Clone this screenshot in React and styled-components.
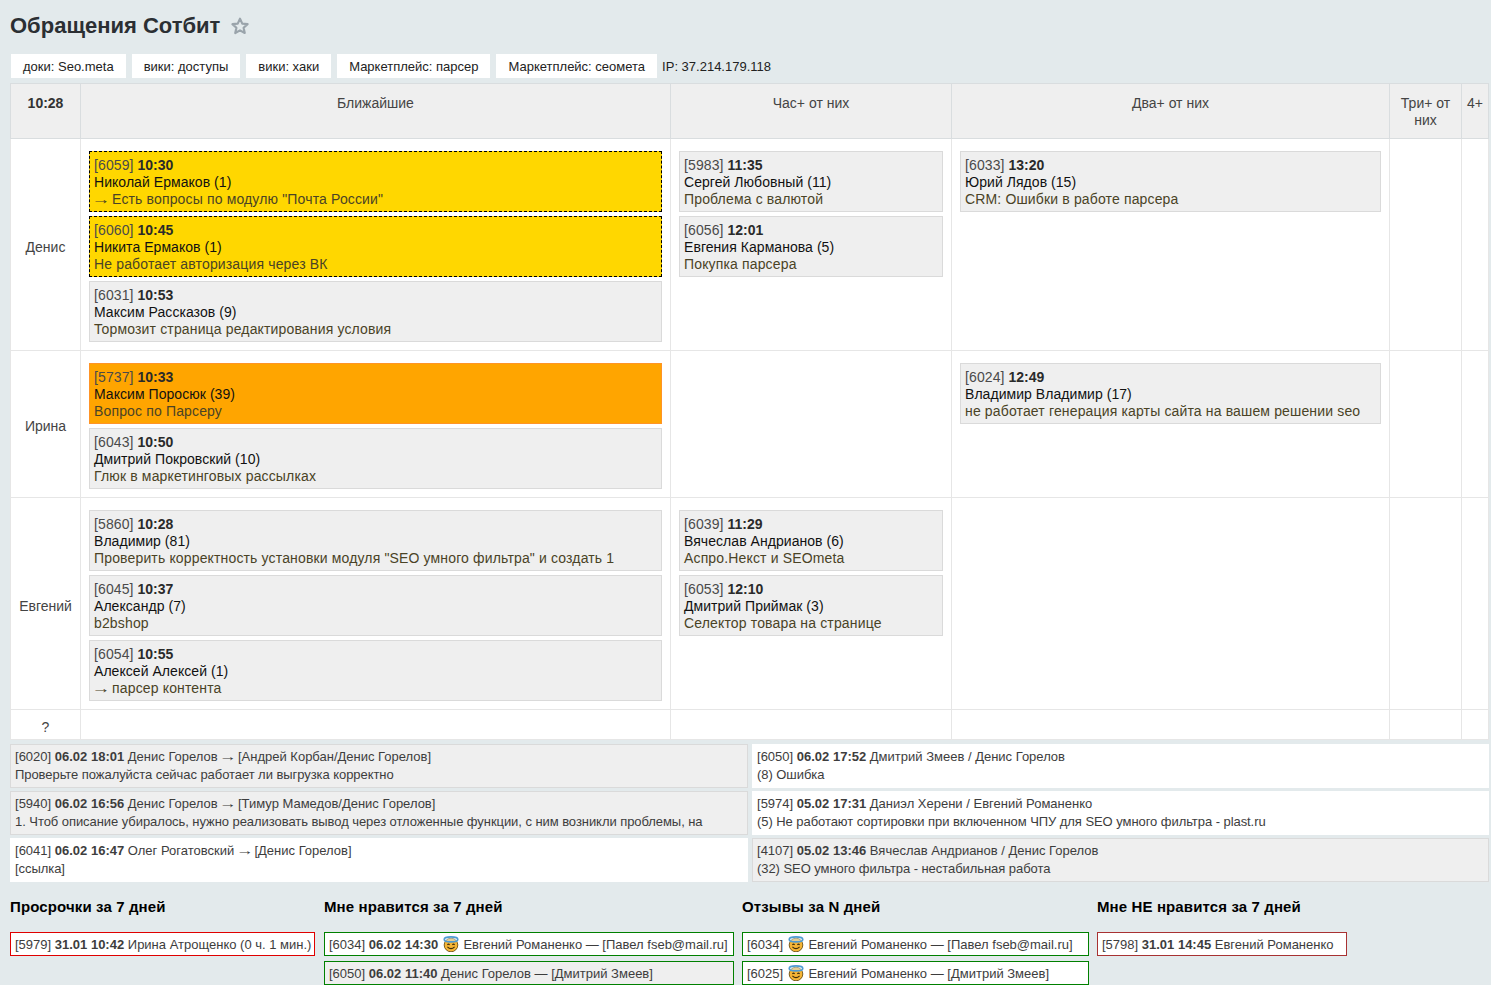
import React from 'react'
import styled, { createGlobalStyle } from 'styled-components'

const GlobalStyle = createGlobalStyle`
    html, body {
        margin: 0;
        padding: 0;
        background: #e3eaec;
        overflow: hidden;
    }
    body {
        font-family: "Liberation Sans", Arial, sans-serif;
        color: #333;
    }
`

const links = ['доки: Seo.meta', 'вики: доступы', 'вики: хаки', 'Маркетплейс: парсер', 'Маркетплейс: сеомета']

const rows = [
    {
        name: 'Денис',
        height: 212,
        cells: [
            [
                { id: 6059, time: '10:30', who: 'Николай Ермаков (1)', arrow: true, text: 'Есть вопросы по модулю "Почта России"', tone: 'yellow' },
                { id: 6060, time: '10:45', who: 'Никита Ермаков (1)', text: 'Не работает авторизация через ВК', tone: 'yellow' },
                { id: 6031, time: '10:53', who: 'Максим Рассказов (9)', text: 'Тормозит страница редактирования условия' },
            ],
            [
                { id: 5983, time: '11:35', who: 'Сергей Любовный (11)', text: 'Проблема с валютой' },
                { id: 6056, time: '12:01', who: 'Евгения Карманова (5)', text: 'Покупка парсера' },
            ],
            [{ id: 6033, time: '13:20', who: 'Юрий Лядов (15)', text: 'CRM: Ошибки в работе парсера' }],
        ],
    },
    {
        name: 'Ирина',
        height: 147,
        cells: [
            [
                { id: 5737, time: '10:33', who: 'Максим Поросюк (39)', text: 'Вопрос по Парсеру', tone: 'orange' },
                { id: 6043, time: '10:50', who: 'Дмитрий Покровский (10)', text: 'Глюк в маркетинговых рассылках' },
            ],
            [],
            [{ id: 6024, time: '12:49', who: 'Владимир Владимир (17)', text: 'не работает генерация карты сайта на вашем решении seo' }],
        ],
    },
    {
        name: 'Евгений',
        height: 212,
        cells: [
            [
                { id: 5860, time: '10:28', who: 'Владимир (81)', text: 'Проверить корректность установки модуля "SEO умного фильтра" и создать 1' },
                { id: 6045, time: '10:37', who: 'Александр (7)', text: 'b2bshop' },
                { id: 6054, time: '10:55', who: 'Алексей Алексей (1)', arrow: true, text: 'парсер контента' },
            ],
            [
                { id: 6039, time: '11:29', who: 'Вячеслав Андрианов (6)', text: 'Аспро.Некст и SEOmeta' },
                { id: 6053, time: '12:10', who: 'Дмитрий Приймак (3)', text: 'Селектор товара на странице' },
            ],
            [],
        ],
    },
]

const feedLeft = [
    { id: 6020, date: '06.02 18:01', from: 'Денис Горелов', to: '[Андрей Корбан/Денис Горелов]', text: 'Проверьте пожалуйста сейчас работает ли выгрузка корректно', grey: true },
    { id: 5940, date: '06.02 16:56', from: 'Денис Горелов', to: '[Тимур Мамедов/Денис Горелов]', text: '1. Чтоб описание убиралось, нужно реализовать вывод через отложенные функции, с ним возникли проблемы, на', grey: true },
    { id: 6041, date: '06.02 16:47', from: 'Олег Рогатовский', to: '[Денис Горелов]', text: '[ссылка]' },
]

const feedRight = [
    { id: 6050, date: '06.02 17:52', from: 'Дмитрий Змеев / Денис Горелов', text: '(8) Ошибка' },
    { id: 5974, date: '05.02 17:31', from: 'Даниэл Херени / Евгений Романенко', text: '(5) Не работают сортировки при включенном ЧПУ для SEO умного фильтра - plast.ru' },
    { id: 4107, date: '05.02 13:46', from: 'Вячеслав Андрианов / Денис Горелов', text: '(32) SEO умного фильтра - нестабильная работа', grey: true },
]

const AngelFace = () => (
    <Face viewBox="0 0 16 16">
        <circle cx="8" cy="9" r="6.8" fill="#f6b535" stroke="#6b4f14" strokeWidth="0.9" />
        <ellipse cx="8" cy="3.4" rx="6.8" ry="2.5" fill="#cfe6f5" fillOpacity="0.5" stroke="#4f9bd2" strokeWidth="1.6" />
        <path d="M4.4 8.8q1.1-1.3 2.2 0M9.4 8.8q1.1-1.3 2.2 0" fill="none" stroke="#3f2c0a" strokeWidth="1.1" />
        <path d="M4.4 10.8q3.6 3.6 7.2 0" fill="none" stroke="#3f2c0a" strokeWidth="1.1" />
    </Face>
)

const Ticket = ({ item }) => (
    <Card $tone={item.tone}>
        <Dim>[{item.id}]</Dim> <b>{item.time}</b>
        <Who>{item.who}</Who>
        <Subject>{item.arrow && <><Arrow>→</Arrow> </>}{item.text}</Subject>
    </Card>
)

const FeedItem = ({ item }) => (
    <FeedCard $grey={item.grey}>
        <div>
            [{item.id}] <b>{item.date}</b> {item.from}
            {item.to && <> <Arrow>→</Arrow> {item.to}</>}
        </div>
        <FeedText>{item.text}</FeedText>
    </FeedCard>
)

const App = () => (
    <Page>
        <GlobalStyle />
        <TitleRow>
            <Title>Обращения Сотбит</Title>
            <Star viewBox="0 0 24 24">
                <path d="M12 3.2l2.7 5.9 6.4.7-4.8 4.3 1.4 6.3L12 17.2l-5.7 3.2 1.4-6.3-4.8-4.3 6.4-.7z" fill="none" stroke="#9aa4ab" strokeWidth="2.6" strokeLinejoin="round" />
            </Star>
        </TitleRow>
        <LinkRow>
            {links.map((l) => <LinkButton key={l}>{l}</LinkButton>)}
            <Ip>IP: 37.214.179.118</Ip>
        </LinkRow>
        <Board>
            <colgroup>
                <col style={{ width: 70 }} />
                <col style={{ width: 590 }} />
                <col style={{ width: 281 }} />
                <col style={{ width: 438 }} />
                <col style={{ width: 72 }} />
                <col style={{ width: 27 }} />
            </colgroup>
            <thead>
                <tr>
                    <Head><b>10:28</b></Head>
                    <Head>Ближайшие</Head>
                    <Head>Час+ от них</Head>
                    <Head>Два+ от них</Head>
                    <Head>Три+ от них</Head>
                    <Head>4+</Head>
                </tr>
            </thead>
            <tbody>
                {rows.map((row) => (
                    <tr key={row.name}>
                        <NameCell style={{ height: row.height }}>{row.name}</NameCell>
                        {row.cells.map((cell, i) => (
                            <Cell key={i}>
                                {cell.map((t) => <Ticket key={t.id} item={t} />)}
                            </Cell>
                        ))}
                        <Cell />
                        <Cell />
                    </tr>
                ))}
                <tr>
                    <LastCell>?</LastCell>
                    <Cell />
                    <Cell />
                    <Cell />
                    <Cell />
                    <Cell />
                </tr>
            </tbody>
        </Board>
        <Feed>
            {feedLeft.map((item, i) => (
                <React.Fragment key={item.id}>
                    <FeedItem item={item} />
                    <FeedItem item={feedRight[i]} />
                </React.Fragment>
            ))}
        </Feed>
        <Stats>
            <StatColumn $width={305} $gap={9}>
                <StatTitle>Просрочки за 7 дней</StatTitle>
                <Stat $border="#e00000">[5979] <b>31.01 10:42</b> Ирина Атрощенко (0 ч. 1 мин.)</Stat>
            </StatColumn>
            <StatColumn $width={410} $gap={8}>
                <StatTitle>Мне нравится за 7 дней</StatTitle>
                <Stat $border="#008000">[6034] <b>06.02 14:30</b> <AngelFace /> Евгений Романенко — [Павел fseb@mail.ru]</Stat>
                <Stat $border="#008000" $grey>[6050] <b>06.02 11:40</b> Денис Горелов — [Дмитрий Змеев]</Stat>
            </StatColumn>
            <StatColumn $width={347} $gap={8}>
                <StatTitle>Отзывы за N дней</StatTitle>
                <Stat $border="#008000">[6034] <AngelFace /> Евгений Романенко — [Павел fseb@mail.ru]</Stat>
                <Stat $border="#008000">[6025] <AngelFace /> Евгений Романенко — [Дмитрий Змеев]</Stat>
            </StatColumn>
            <StatColumn $width={250}>
                <StatTitle>Мне НЕ нравится за 7 дней</StatTitle>
                <Stat $border="#a83232">[5798] <b>31.01 14:45</b> Евгений Романенко</Stat>
            </StatColumn>
        </Stats>
    </Page>
)

const Page = styled.div`
    width: 1491px;
    height: 985px;
    padding: 0 2px 0 10px;
    box-sizing: border-box;
    overflow: hidden;
`

const TitleRow = styled.div`
    display: flex;
    align-items: center;
    height: 51px;
`

const Title = styled.h1`
    margin: 0;
    font-size: 22px;
    font-weight: 700;
    color: #2b2f33;
`

const Star = styled.svg`
    width: 20px;
    height: 20px;
    margin-left: 10px;
`

const LinkRow = styled.div`
    display: flex;
    align-items: flex-start;
    gap: 6px;
    height: 32px;
    padding: 3px 0 0 1px;
    box-sizing: border-box;
`

const LinkButton = styled.div`
    background: #fff;
    height: 24px;
    line-height: 25px;
    padding: 0 12px;
    font-size: 13px;
    color: #222;
`

const Ip = styled.div`
    font-size: 13px;
    line-height: 25px;
    margin-left: -1px;
    color: #222;
`

const Board = styled.table`
    width: 1479px;
    table-layout: fixed;
    border-collapse: collapse;
    background: #fff;
`

const Head = styled.th`
    height: 55px;
    padding: 11px 4px 0;
    box-sizing: border-box;
    vertical-align: top;
    background: #efefef;
    border: 1px solid #d9dddf;
    font-size: 14px;
    line-height: 17px;
    font-weight: 400;
    color: #444;

    b {
        color: #333;
    }
`

const Cell = styled.td`
    padding: 12px 8px 4px;
    vertical-align: top;
    border: 1px solid #e6e6e6;
`

const NameCell = styled.td`
    padding: 4px 4px 0;
    box-sizing: border-box;
    text-align: center;
    vertical-align: middle;
    border: 1px solid #e6e6e6;
    font-size: 14px;
    color: #444;
`

const LastCell = styled(NameCell)`
    height: 30px;
`

const toneColors = { yellow: '#ffd700', orange: '#ffa500' }

const Card = styled.div`
    background: ${(p) => toneColors[p.$tone] || '#efefef'};
    border: ${(p) => (p.$tone === 'yellow' ? '1px dashed #000' : p.$tone === 'orange' ? '1px solid #ff9426' : '1px solid #dadada')};
    height: 61px;
    box-sizing: border-box;
    padding: 5px 4px;
    margin-bottom: 4px;
    font-size: 14px;
    line-height: 17px;
    color: #333;
    white-space: nowrap;
    overflow: hidden;

    b {
        color: #2a2a2a;
    }
`

const Dim = styled.span`
    color: #4a4a4a;
    letter-spacing: 0.1px;
`

const Who = styled.div`
    color: #111;
    letter-spacing: 0.05px;
`

const Subject = styled.div`
    color: #4a4326;
    letter-spacing: 0.15px;
`

const Arrow = styled.span`
    display: inline-block;
    transform: scaleX(1.35);
    letter-spacing: 0;
`

const Feed = styled.div`
    display: grid;
    grid-template-columns: 738px 737px;
    column-gap: 4px;
    row-gap: 3px;
    margin-top: 4px;
`

const FeedCard = styled.div`
    background: ${(p) => (p.$grey ? '#efefef' : '#fff')};
    border: 1px solid ${(p) => (p.$grey ? '#dadada' : '#fff')};
    height: 44px;
    box-sizing: border-box;
    padding: 3px 4px;
    font-size: 13px;
    line-height: 17px;
    color: #3d3d3d;
    white-space: nowrap;
    overflow: hidden;
`

const FeedText = styled.div`
    margin-top: 1px;
    letter-spacing: -0.06px;
`

const Stats = styled.div`
    display: flex;
    margin-top: 15px;
`

const StatColumn = styled.div`
    width: ${(p) => p.$width}px;
    margin-right: ${(p) => p.$gap || 0}px;
    flex: none;
`

const StatTitle = styled.h3`
    margin: 0 0 15px;
    height: 20px;
    font-size: 15px;
    line-height: 20px;
    font-weight: 700;
    letter-spacing: 0.12px;
    color: #000;
    white-space: nowrap;
`

const Stat = styled.div`
    height: 24px;
    box-sizing: border-box;
    margin-bottom: 5px;
    padding: 0 4px;
    border: 1px solid ${(p) => p.$border};
    background: ${(p) => (p.$grey ? '#efefef' : '#fff')};
    font-size: 13px;
    line-height: 24px;
    color: #3d3d3d;
    white-space: nowrap;
`

const Face = styled.svg`
    width: 16px;
    height: 16px;
    margin: 0 1px;
    vertical-align: -3px;
`

export default App
